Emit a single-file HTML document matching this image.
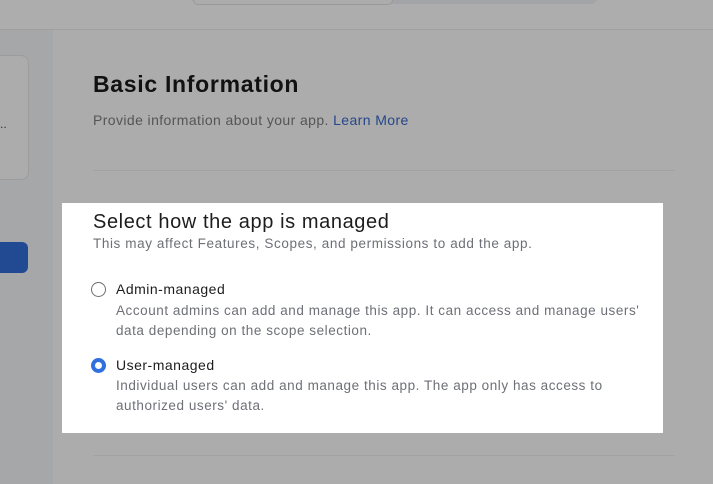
<!DOCTYPE html>
<html><head><style>
body{margin:0;width:713px;height:484px;overflow:hidden;background:#acacac;font-family:"Liberation Sans",sans-serif;position:relative}
.a{position:absolute}
</style></head><body>
<div class="a" style="left:0;top:0;width:713px;height:29px;background:#adadad;border-bottom:1px solid #9f9f9f"></div>
<div class="a" style="left:192px;top:-10px;width:405px;height:14px;background:#a3a4a7;border-radius:6px"></div>
<div class="a" style="left:193px;top:-10px;width:198px;height:13px;background:#acacac;border:1px solid #999;border-radius:5px"></div>
<div class="a" style="left:0;top:30px;width:53px;height:454px;background:#a6a7a9"></div>
<div class="a" style="left:-10px;top:55px;width:37px;height:123px;border:1px solid #9c9c9c;border-radius:8px;background:#acacac"></div>
<div class="a" style="left:0;top:117px;font-size:12px;color:#333">..</div>
<div class="a" style="left:-10px;top:242px;width:38px;height:31px;background:#224a93;border-radius:6px"></div>
<div class="a" style="left:93px;top:71px;font-size:23px;font-weight:bold;color:#111;letter-spacing:0.7px">Basic Information</div>
<div class="a" style="left:93px;top:112px;font-size:14px;color:#555;letter-spacing:0.4px">Provide information about your app. <span style="color:#24468a">Learn More</span></div>
<div class="a" style="left:93px;top:170px;width:582px;height:1px;background:#a2a2a2"></div>
<div class="a" style="left:93px;top:455px;width:582px;height:1px;background:#a2a2a2"></div>
<div class="a" style="left:62px;top:203px;width:601px;height:230px;background:#fff"></div>
<div class="a" style="left:93px;top:211px;font-size:20px;color:#1d1d1d;letter-spacing:0.6px">Select how the app is managed</div>
<div class="a" style="left:93px;top:236px;font-size:13.5px;color:#6e7077;letter-spacing:0.6px">This may affect Features, Scopes, and permissions to add the app.</div>
<div class="a" style="left:91px;top:282px;width:13px;height:13px;border:1.5px solid #6d6d6d;border-radius:50%"></div>
<div class="a" style="left:116px;top:281px;font-size:14px;color:#1d1d1d;letter-spacing:0.5px">Admin-managed</div>
<div class="a" style="left:116px;top:301px;font-size:13.5px;line-height:20px;color:#6e7077;width:540px;letter-spacing:0.55px">Account admins can add and manage this app. It can access and manage users' data depending on the scope selection.</div>
<div class="a" style="left:91px;top:358px;width:7px;height:7px;border:4.5px solid #2f6fe0;border-radius:50%"></div>
<div class="a" style="left:116px;top:357px;font-size:14px;color:#1d1d1d;letter-spacing:0.5px">User-managed</div>
<div class="a" style="left:116px;top:376px;font-size:13.5px;line-height:20px;color:#6e7077;width:540px;letter-spacing:0.55px">Individual users can add and manage this app. The app only has access to authorized users' data.</div>
</body></html>
